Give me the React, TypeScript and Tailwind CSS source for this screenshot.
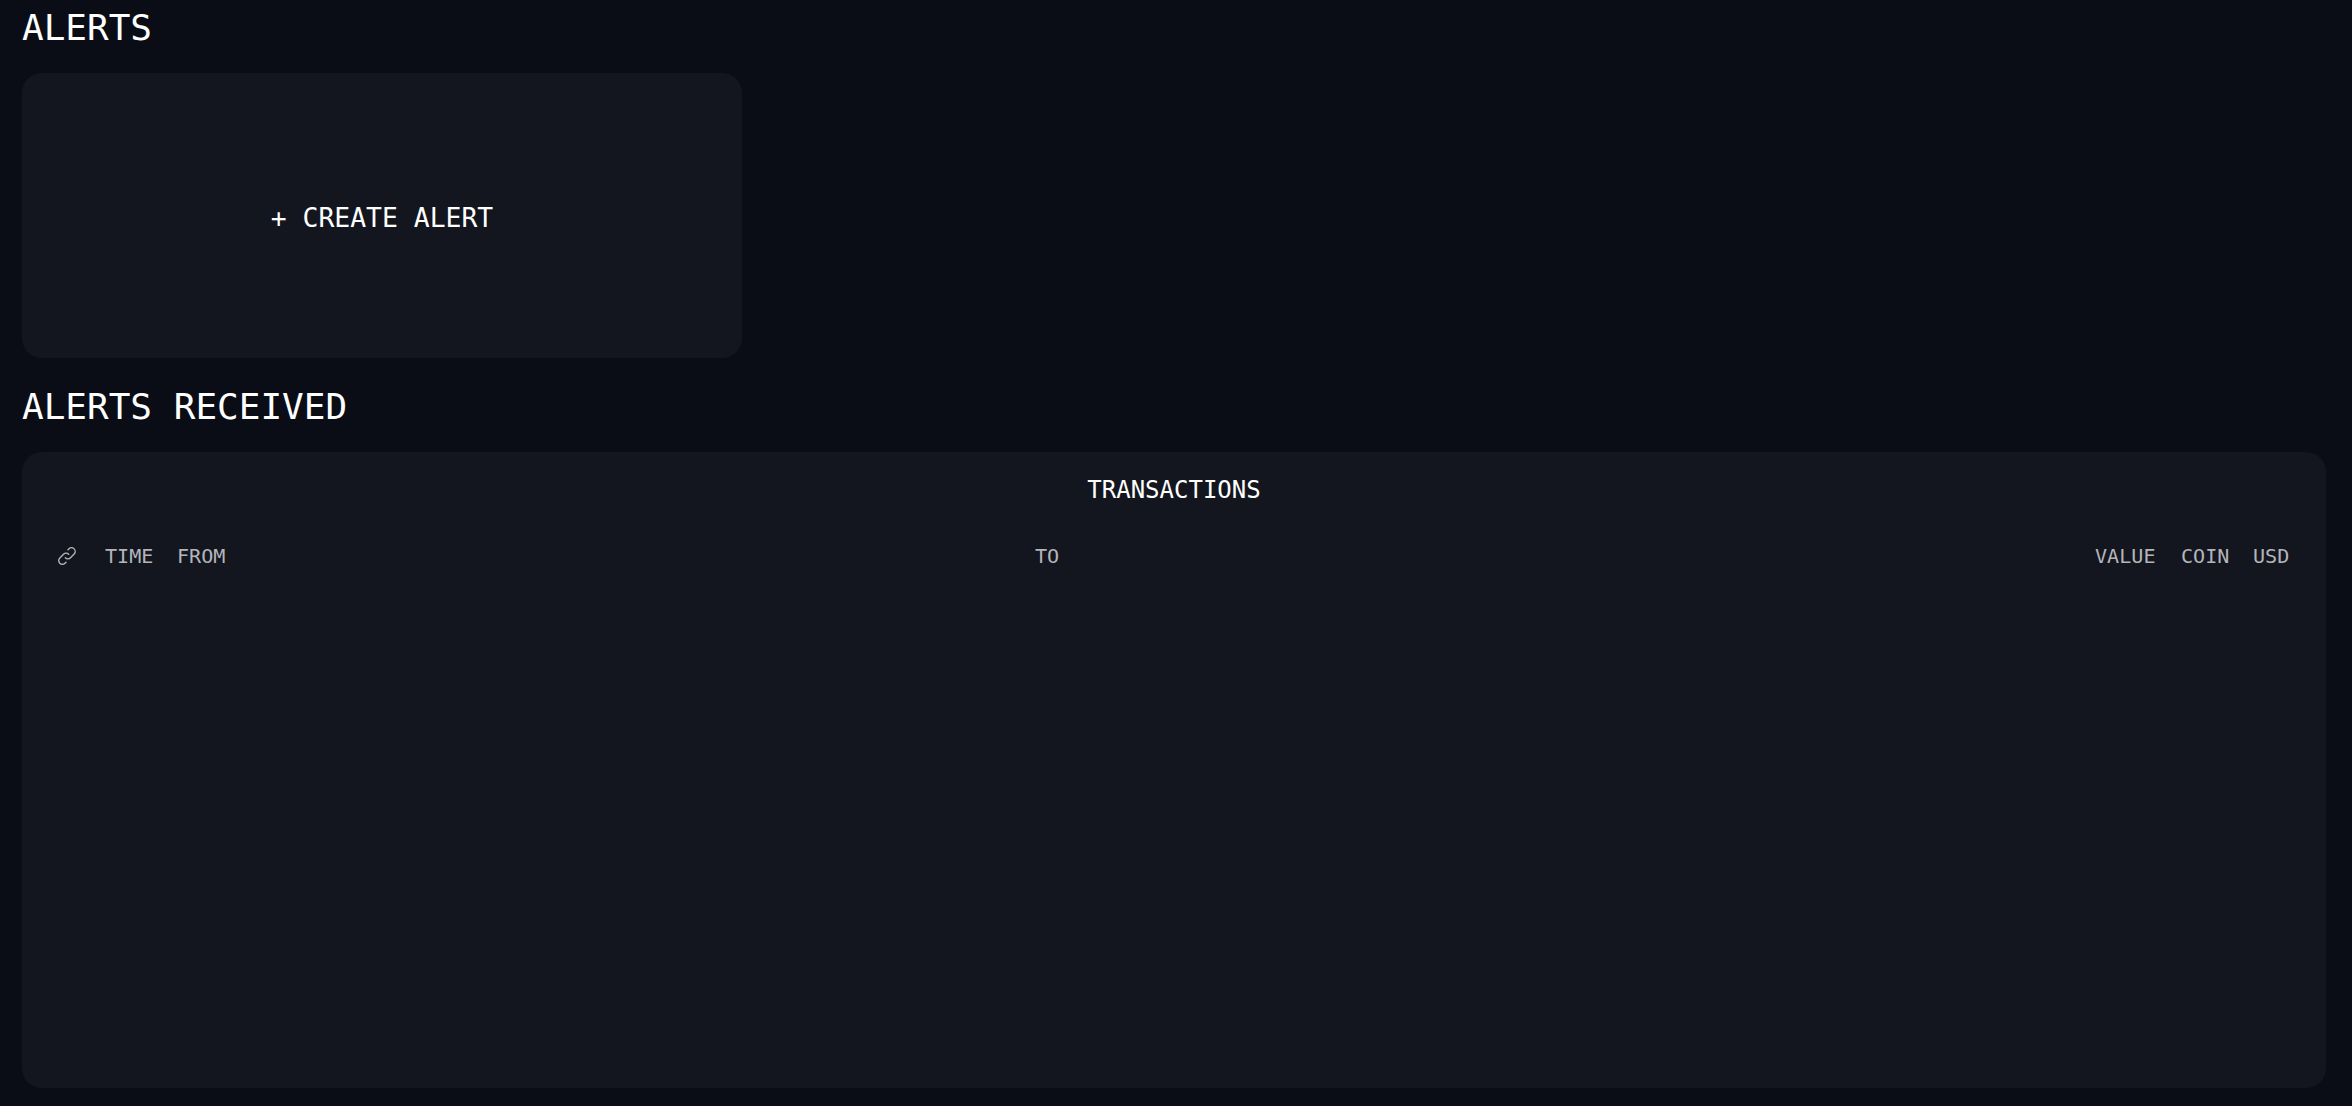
import React from 'react';

const columns = [
  { label: 'TIME' },
  { label: 'FROM' },
  { label: 'TO' },
  { label: 'VALUE' },
  { label: 'COIN' },
  { label: 'USD' },
];

export default function App() {
  return (
    <div className="h-[1106px] overflow-hidden bg-[#0a0d15] pl-[22px] pr-[26px] font-['DejaVu_Sans_Mono','Liberation_Mono',monospace] text-white">
      <h1 className="h-[57px] pt-[5px] text-[36px] leading-[46px]">ALERTS</h1>

      {/* Create alert */}
      <div className="mt-4 flex h-[285px] w-[720px] items-center justify-center rounded-[20px] bg-[#13161e] pt-[5px] text-[26.4px]">
        + CREATE ALERT
      </div>

      <h2 className="mt-[22px] h-[72px] pt-1 text-[36px] leading-[46px]">ALERTS RECEIVED</h2>

      {/* Alerts received table */}
      <div className="h-[636px] rounded-[20px] bg-[#13161e] px-9 pt-[22px]">
        <div className="text-center text-2xl leading-8">TRANSACTIONS</div>
        <div className="mt-9 grid grid-cols-[23px_48px_834px_1036px_62px_48px_36px] gap-x-6 text-[20.1px] leading-7 text-[#b4b5bb]">
          <div className="flex items-center">
            <svg width="22" height="22" viewBox="0 0 24 24" fill="none" stroke="currentColor" strokeWidth="1.5" strokeLinecap="round" strokeLinejoin="round" className="-ml-0.5 -mt-px">
              <path d="M13.828 10.172a4 4 0 00-5.656 0l-4 4a4 4 0 105.656 5.656l1.102-1.101" />
              <path d="M10.172 13.828a4 4 0 005.656 0l4-4a4 4 0 00-5.656-5.656l-1.1 1.1" />
            </svg>
          </div>
          {columns.map((c) => (
            <div key={c.label}>{c.label}</div>
          ))}
        </div>
      </div>
    </div>
  );
}
